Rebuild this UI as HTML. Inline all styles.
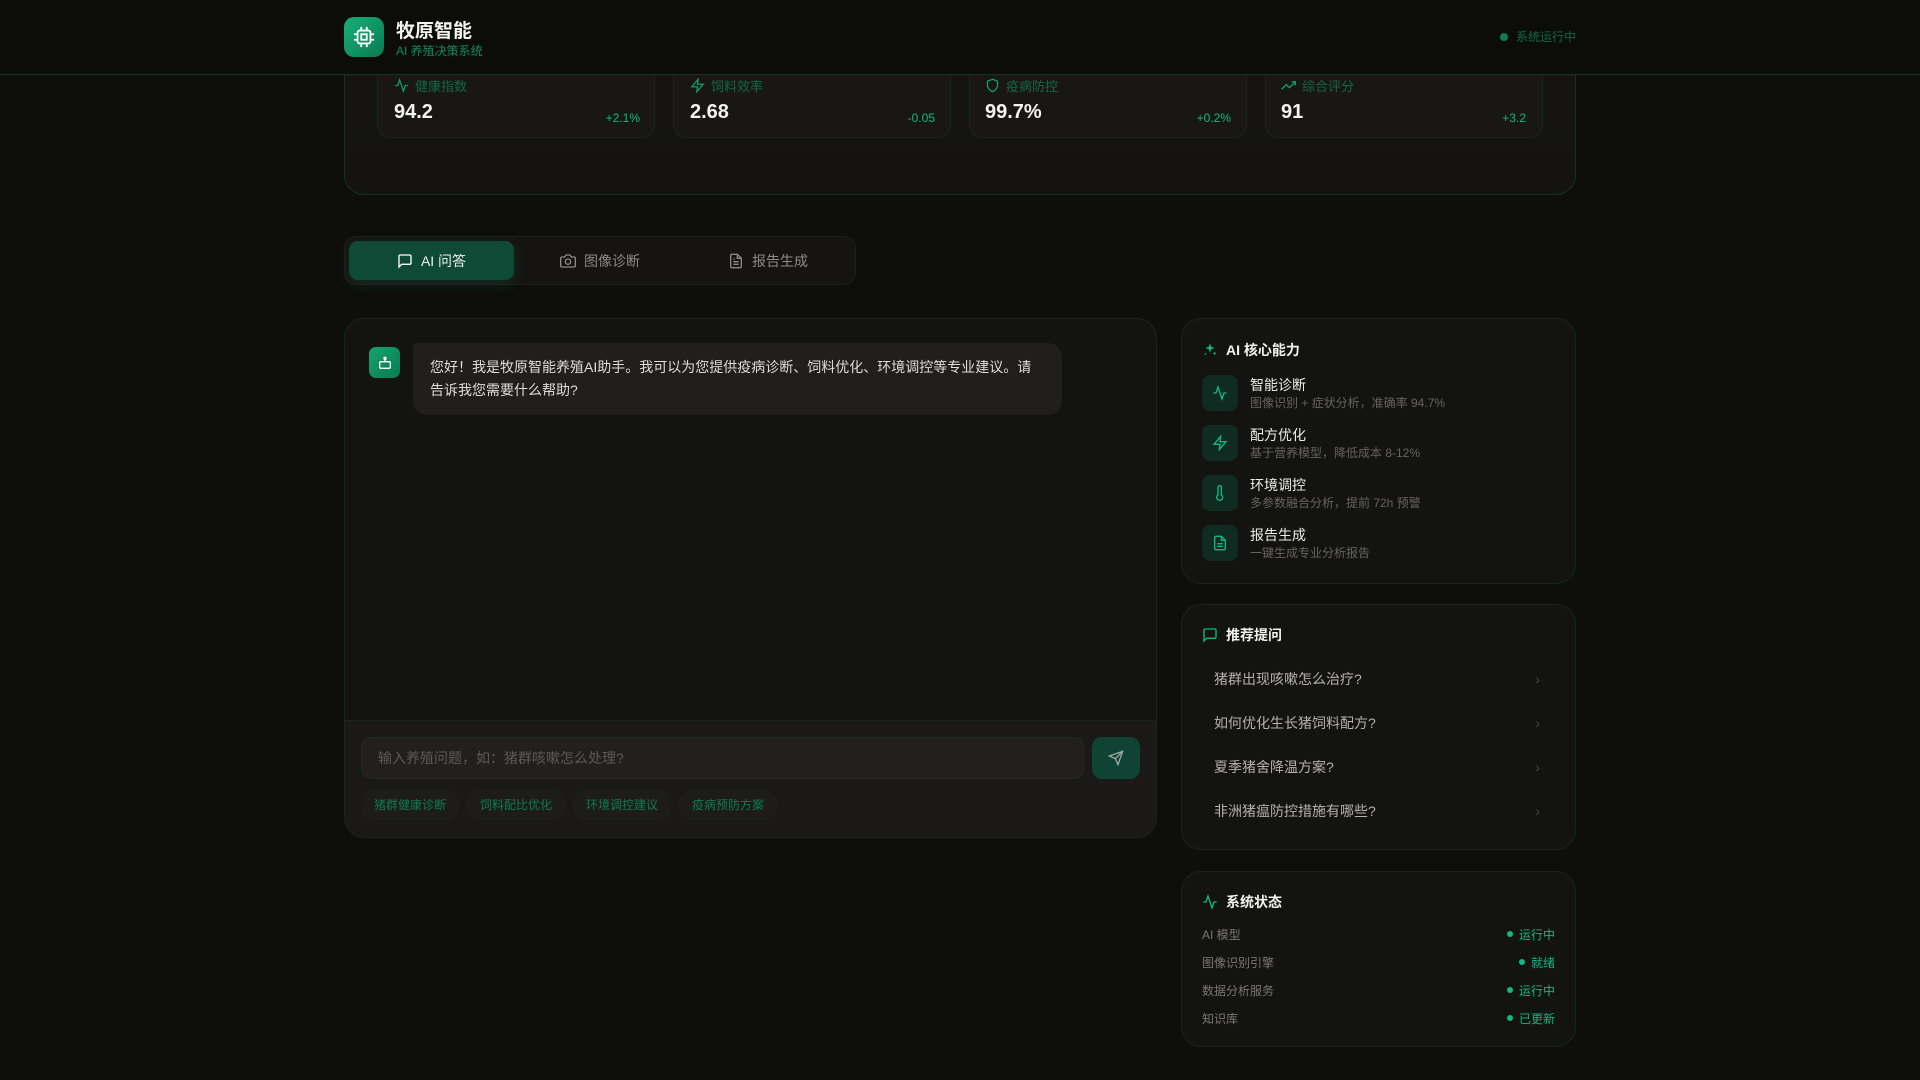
<!DOCTYPE html>
<html><head><meta charset="utf-8"><style>
*{box-sizing:border-box;margin:0;padding:0}
body{width:1920px;height:1080px;overflow:hidden;background:#0e0e0d;font-family:"Liberation Sans","Noto Sans CJK SC",sans-serif;color:#e8e8e6;position:relative}
.abs{position:absolute}
.card{position:absolute;background:#131312;border:1px solid #17261f;border-radius:20px}
svg{display:block}
.g{color:#10b981}
</style></head><body>
<div class="card" style="left:344px;top:-40px;width:1232px;height:235px;background:linear-gradient(180deg,#161514,#141312);border-color:#183028"></div>
<div class="abs" style="left:377px;top:40px;width:1166px;height:98px">
 <div class="card" style="left:0;top:0;width:278px;height:98px;background:#181716;border-color:#1b2521;border-radius:14px"></div>
 <div class="card" style="left:296px;top:0;width:278px;height:98px;background:#181716;border-color:#1b2521;border-radius:14px"></div>
 <div class="card" style="left:592px;top:0;width:278px;height:98px;background:#181716;border-color:#1b2521;border-radius:14px"></div>
 <div class="card" style="left:888px;top:0;width:278px;height:98px;background:#181716;border-color:#1b2521;border-radius:14px"></div>
</div>
<div class="abs" style="left:394px;top:76px;font-size:13px;color:#16664a;display:flex;align-items:center;gap:6px"><svg width="15" height="15" viewBox="0 0 24 24" fill="none" stroke="#10a070" stroke-width="2"><path d="M22 12h-4l-3 9L9 3l-3 9H2"/></svg>健康指数</div>
<div class="abs" style="left:394px;top:101px;font-size:20px;font-weight:bold;color:#f2f2f0">94.2</div>
<div class="abs g" style="left:600px;top:111px;font-size:12px;width:40px;text-align:right">+2.1%</div>
<div class="abs" style="left:690px;top:76px;font-size:13px;color:#16664a;display:flex;align-items:center;gap:6px"><svg width="15" height="15" viewBox="0 0 24 24" fill="none" stroke="#10a070" stroke-width="2"><path d="M13 2L3 14h9l-1 8 10-12h-9l1-8z"/></svg>饲料效率</div>
<div class="abs" style="left:690px;top:101px;font-size:20px;font-weight:bold;color:#f2f2f0">2.68</div>
<div class="abs g" style="left:895px;top:111px;font-size:12px;width:40px;text-align:right">-0.05</div>
<div class="abs" style="left:985px;top:76px;font-size:13px;color:#16664a;display:flex;align-items:center;gap:6px"><svg width="15" height="15" viewBox="0 0 24 24" fill="none" stroke="#10a070" stroke-width="2"><path d="M12 22s8-4 8-10V5l-8-3-8 3v7c0 6 8 10 8 10z"/></svg>疫病防控</div>
<div class="abs" style="left:985px;top:101px;font-size:20px;font-weight:bold;color:#f2f2f0">99.7%</div>
<div class="abs g" style="left:1191px;top:111px;font-size:12px;width:40px;text-align:right">+0.2%</div>
<div class="abs" style="left:1281px;top:76px;font-size:13px;color:#16664a;display:flex;align-items:center;gap:6px"><svg width="15" height="15" viewBox="0 0 24 24" fill="none" stroke="#10a070" stroke-width="2"><path d="M23 6l-9.5 9.5-5-5L1 18M17 6h6v6"/></svg>综合评分</div>
<div class="abs" style="left:1281px;top:101px;font-size:20px;font-weight:bold;color:#f2f2f0">91</div>
<div class="abs g" style="left:1486px;top:111px;font-size:12px;width:40px;text-align:right">+3.2</div>

<div class="abs" style="left:0;top:0;width:1920px;height:75px;background:#0c0c0b;border-bottom:1px solid #143526"></div>
<div class="abs" style="left:344px;top:17px;width:40px;height:40px;border-radius:10px;background:linear-gradient(135deg,#17b07a,#0a7a52);display:flex;align-items:center;justify-content:center">
<svg width="22" height="22" viewBox="0 0 24 24" fill="none" stroke="#fff" stroke-width="2"><rect x="5" y="5" width="14" height="14" rx="2"/><rect x="9" y="9" width="6" height="6"/><path d="M9 1v4M15 1v4M9 19v4M15 19v4M1 9h4M1 15h4M19 9h4M19 15h4"/></svg></div>
<div class="abs" style="left:396px;top:16px;font-size:19px;font-weight:bold;color:#f4f4f2">牧原智能</div>
<div class="abs" style="left:396px;top:42px;font-size:12px;color:#0f8a5e">AI 养殖决策系统</div>
<div class="abs" style="left:1500px;top:28px;font-size:12px;color:#0f6a48;display:flex;align-items:center;gap:8px"><span style="width:8px;height:8px;border-radius:50%;background:#0f7a55;display:inline-block"></span>系统运行中</div>

<div class="abs" style="left:344px;top:236px;width:512px;height:49px;background:#151413;border:1px solid #1c1f1d;border-radius:12px"></div>
<div class="abs" style="left:349px;top:241px;width:165px;height:39px;background:#0f4a37;border-radius:9px;box-shadow:0 4px 14px rgba(16,120,85,.25);display:flex;align-items:center;justify-content:center;gap:8px;font-size:14px;color:#f0f0ee"><svg width="16" height="16" viewBox="0 0 24 24" fill="none" stroke="#fff" stroke-width="2"><path d="M21 15a2 2 0 0 1-2 2H7l-4 4V5a2 2 0 0 1 2-2h14a2 2 0 0 1 2 2z"/></svg>AI 问答</div>
<div class="abs" style="left:520px;top:241px;width:160px;height:39px;display:flex;align-items:center;justify-content:center;gap:8px;font-size:14px;color:#8a8a86"><svg width="16" height="16" viewBox="0 0 24 24" fill="none" stroke="#8a8a86" stroke-width="2"><path d="M23 19a2 2 0 0 1-2 2H3a2 2 0 0 1-2-2V8a2 2 0 0 1 2-2h4l2-3h6l2 3h4a2 2 0 0 1 2 2z"/><circle cx="12" cy="13" r="4"/></svg>图像诊断</div>
<div class="abs" style="left:688px;top:241px;width:160px;height:39px;display:flex;align-items:center;justify-content:center;gap:8px;font-size:14px;color:#8a8a86"><svg width="16" height="16" viewBox="0 0 24 24" fill="none" stroke="#8a8a86" stroke-width="2"><path d="M14 2H6a2 2 0 0 0-2 2v16a2 2 0 0 0 2 2h12a2 2 0 0 0 2-2V8z"/><path d="M14 2v6h6M16 13H8M16 17H8M10 9H8"/></svg>报告生成</div>

<div class="card" style="left:344px;top:318px;width:813px;height:520px;overflow:hidden">
 <div class="abs" style="left:0;top:401px;width:813px;height:119px;background:#1a1918;border-top:1px solid #16261f"></div>
</div>
<div class="abs" style="left:369px;top:347px;width:31px;height:31px;border-radius:7px;background:linear-gradient(135deg,#15a371,#0b7a52);display:flex;align-items:center;justify-content:center"><svg width="16" height="16" viewBox="0 0 24 24" fill="none" stroke="#fff" stroke-width="2"><rect x="4" y="10" width="16" height="10" rx="2"/><path d="M12 6v4"/><circle cx="12" cy="5" r="1.5"/><path d="M9 15h.01M15 15h.01"/></svg></div>
<div class="abs" style="left:413px;top:343px;width:649px;height:72px;background:#211f1d;border-radius:4px 14px 14px 14px;padding:13px 17px;font-size:14px;line-height:23px;color:#deded9">您好！我是牧原智能养殖AI助手。我可以为您提供疫病诊断、饲料优化、环境调控等专业建议。请告诉我您需要什么帮助?</div>
<div class="abs" style="left:361px;top:737px;width:723px;height:42px;background:#221f1d;border:1px solid #1f2a24;border-radius:10px;padding-left:16px;line-height:40px;font-size:14px;color:#5c5a56">输入养殖问题，如：猪群咳嗽怎么处理?</div>
<div class="abs" style="left:1092px;top:737px;width:48px;height:42px;background:#0f4434;border-radius:10px;display:flex;align-items:center;justify-content:center"><svg width="16" height="16" viewBox="0 0 24 24" fill="none" stroke="#9aa8a2" stroke-width="2"><path d="M22 2L11 13M22 2l-7 20-4-9-9-4z"/></svg></div>
<div class="abs" style="left:361px;top:790px;display:flex;gap:8px;font-size:12px;color:#0f7a55">
 <span style="height:30px;padding:0 12px;line-height:28px;border:1px solid #1d221f;background:#1d1c1a;border-radius:15px">猪群健康诊断</span>
 <span style="height:30px;padding:0 12px;line-height:28px;border:1px solid #1d221f;background:#1d1c1a;border-radius:15px">饲料配比优化</span>
 <span style="height:30px;padding:0 12px;line-height:28px;border:1px solid #1d221f;background:#1d1c1a;border-radius:15px">环境调控建议</span>
 <span style="height:30px;padding:0 12px;line-height:28px;border:1px solid #1d221f;background:#1d1c1a;border-radius:15px">疫病预防方案</span>
</div>

<div class="card" style="left:1181px;top:318px;width:395px;height:266px"></div>
<div class="abs" style="left:1202px;top:340px;display:flex;align-items:center;gap:8px;font-size:14px;font-weight:bold;color:#f2f2f0"><svg width="16" height="16" viewBox="0 0 24 24" fill="#10b981"><path d="M12 2l1.8 5.2L19 9l-5.2 1.8L12 16l-1.8-5.2L5 9l5.2-1.8zM19 14l.8 2.2L22 17l-2.2.8L19 20l-.8-2.2L16 17l2.2-.8zM5 16l.6 1.4L7 18l-1.4.6L5 20l-.6-1.4L3 18l1.4-.6z"/></svg>AI 核心能力</div>
<div class="abs" style="left:1202px;top:375px;width:360px">
 <div style="display:flex;gap:12px;height:50px"><div style="width:36px;height:36px;background:#0f2b22;border-radius:8px;display:flex;align-items:center;justify-content:center"><svg width="16" height="16" viewBox="0 0 24 24" fill="none" stroke="#10b981" stroke-width="2"><path d="M22 12h-4l-3 9L9 3l-3 9H2"/></svg></div><div><div style="font-size:14px;color:#ececea;line-height:20px">智能诊断</div><div style="font-size:12px;color:#66645f;line-height:17px">图像识别 + 症状分析，准确率 94.7%</div></div></div>
 <div style="display:flex;gap:12px;height:50px"><div style="width:36px;height:36px;background:#0f2b22;border-radius:8px;display:flex;align-items:center;justify-content:center"><svg width="16" height="16" viewBox="0 0 24 24" fill="none" stroke="#10b981" stroke-width="2"><path d="M13 2L3 14h9l-1 8 10-12h-9l1-8z"/></svg></div><div><div style="font-size:14px;color:#ececea;line-height:20px">配方优化</div><div style="font-size:12px;color:#66645f;line-height:17px">基于营养模型，降低成本 8-12%</div></div></div>
 <div style="display:flex;gap:12px;height:50px"><div style="width:36px;height:36px;background:#0f2b22;border-radius:8px;display:flex;align-items:center;justify-content:center"><svg width="16" height="16" viewBox="0 0 24 24" fill="none" stroke="#10b981" stroke-width="2"><path d="M14 14.76V3.5a2.5 2.5 0 0 0-5 0v11.26a4.5 4.5 0 1 0 5 0z"/></svg></div><div><div style="font-size:14px;color:#ececea;line-height:20px">环境调控</div><div style="font-size:12px;color:#66645f;line-height:17px">多参数融合分析，提前 72h 预警</div></div></div>
 <div style="display:flex;gap:12px;height:50px"><div style="width:36px;height:36px;background:#0f2b22;border-radius:8px;display:flex;align-items:center;justify-content:center"><svg width="16" height="16" viewBox="0 0 24 24" fill="none" stroke="#10b981" stroke-width="2"><path d="M14 2H6a2 2 0 0 0-2 2v16a2 2 0 0 0 2 2h12a2 2 0 0 0 2-2V8z"/><path d="M14 2v6h6M16 13H8M16 17H8"/></svg></div><div><div style="font-size:14px;color:#ececea;line-height:20px">报告生成</div><div style="font-size:12px;color:#66645f;line-height:17px">一键生成专业分析报告</div></div></div>
</div>

<div class="card" style="left:1181px;top:604px;width:395px;height:246px"></div>
<div class="abs" style="left:1202px;top:625px;display:flex;align-items:center;gap:8px;font-size:14px;font-weight:bold;color:#f2f2f0"><svg width="16" height="16" viewBox="0 0 24 24" fill="none" stroke="#10b981" stroke-width="2"><path d="M21 15a2 2 0 0 1-2 2H7l-4 4V5a2 2 0 0 1 2-2h14a2 2 0 0 1 2 2z"/></svg>推荐提问</div>
<div class="abs" style="left:1202px;top:657px;width:350px;font-size:14px;color:#b4b2ad">
 <div style="height:44px;display:flex;align-items:center;justify-content:space-between;padding:0 12px"><span>猪群出现咳嗽怎么治疗?</span><span style="color:#4a4945">›</span></div>
 <div style="height:44px;display:flex;align-items:center;justify-content:space-between;padding:0 12px"><span>如何优化生长猪饲料配方?</span><span style="color:#4a4945">›</span></div>
 <div style="height:44px;display:flex;align-items:center;justify-content:space-between;padding:0 12px"><span>夏季猪舍降温方案?</span><span style="color:#4a4945">›</span></div>
 <div style="height:44px;display:flex;align-items:center;justify-content:space-between;padding:0 12px"><span>非洲猪瘟防控措施有哪些?</span><span style="color:#4a4945">›</span></div>
</div>

<div class="card" style="left:1181px;top:871px;width:395px;height:176px"></div>
<div class="abs" style="left:1202px;top:892px;display:flex;align-items:center;gap:8px;font-size:14px;font-weight:bold;color:#f2f2f0"><svg width="16" height="16" viewBox="0 0 24 24" fill="none" stroke="#10b981" stroke-width="2"><path d="M22 12h-4l-3 9L9 3l-3 9H2"/></svg>系统状态</div>
<div class="abs" style="left:1202px;top:920px;width:353px;font-size:12px">
 <div style="height:28px;display:flex;justify-content:space-between;align-items:center"><span style="color:#7a7874">AI 模型</span><span class="g" style="display:flex;align-items:center;gap:6px"><i style="width:6px;height:6px;border-radius:50%;background:#10b981;display:inline-block"></i>运行中</span></div>
 <div style="height:28px;display:flex;justify-content:space-between;align-items:center"><span style="color:#7a7874">图像识别引擎</span><span class="g" style="display:flex;align-items:center;gap:6px"><i style="width:6px;height:6px;border-radius:50%;background:#10b981;display:inline-block"></i>就绪</span></div>
 <div style="height:28px;display:flex;justify-content:space-between;align-items:center"><span style="color:#7a7874">数据分析服务</span><span class="g" style="display:flex;align-items:center;gap:6px"><i style="width:6px;height:6px;border-radius:50%;background:#10b981;display:inline-block"></i>运行中</span></div>
 <div style="height:28px;display:flex;justify-content:space-between;align-items:center"><span style="color:#7a7874">知识库</span><span class="g" style="display:flex;align-items:center;gap:6px"><i style="width:6px;height:6px;border-radius:50%;background:#10b981;display:inline-block"></i>已更新</span></div>
</div>
</body></html>
